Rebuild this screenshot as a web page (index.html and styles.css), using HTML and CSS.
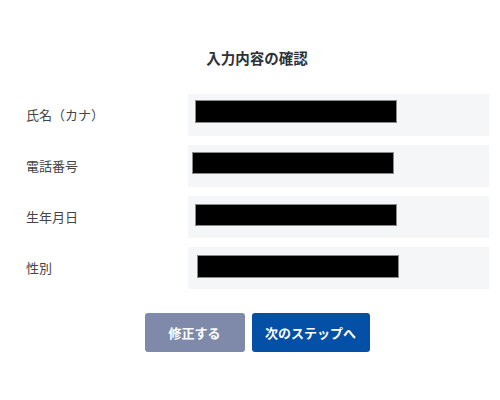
FILE: index.html
```html
<!DOCTYPE html>
<html lang="ja">
<head>
<meta charset="utf-8">
<link rel="stylesheet" href="styles.css">
</head>
<body>
<main class="confirm">
  <h1 class="title">入力内容の確認</h1>
  <dl class="list">
    <div class="row">
      <dt class="label">氏名（カナ）</dt>
      <dd class="value"><span class="mask mask-1"></span></dd>
    </div>
    <div class="row">
      <dt class="label">電話番号</dt>
      <dd class="value"><span class="mask mask-2"></span></dd>
    </div>
    <div class="row">
      <dt class="label">生年月日</dt>
      <dd class="value"><span class="mask mask-3"></span></dd>
    </div>
    <div class="row">
      <dt class="label">性別</dt>
      <dd class="value"><span class="mask mask-4"></span></dd>
    </div>
  </dl>
  <div class="actions">
    <button class="btn btn-back">修正する</button>
    <button class="btn btn-next">次のステップへ</button>
  </div>
</main>
</body>
</html>
```
FILE: styles.css
```css
* { box-sizing: border-box; }
html, body { margin: 0; padding: 0; background: #ffffff; }
body {
  font-family: "Noto Sans CJK JP", "Noto Sans", sans-serif;
  color: #333333;
}
.confirm {
  width: 489px;
  padding: 0 0 0 25px;
}
.title {
  margin: 0;
  padding-top: 47px;
  height: 94px;
  font-size: 14.5px;
  line-height: 22px;
  font-weight: 700;
  text-align: center;
  color: #2e3136;
}
.list {
  margin: 0;
  display: flex;
  flex-direction: column;
  gap: 9px;
}
.row {
  display: flex;
  align-items: center;
  height: 42px;
}
.label {
  width: 163px;
  flex: none;
  font-size: 13px;
  line-height: 20px;
  color: #444444;
  padding-left: 1px;
}
.value {
  margin: 0;
  flex: 1;
  height: 42px;
  background: #f5f6f8;
  position: relative;
}
.mask {
  display: block;
  width: 200px;
  height: 20px;
  background: #000000;
  box-shadow: 0 0 0 1px #8a8a8a;
}
.mask-1 { margin: 7px 0 0 8px; height: 21px; }
.mask-2 { margin: 8px 0 0 5px; }
.mask-3 { margin: 9px 0 0 8px; }
.mask-4 { margin: 9px 0 0 10px; height: 21px; }
.actions {
  display: flex;
  justify-content: center;
  gap: 7px;
  margin-top: 24px;
}
.btn {
  height: 39px;
  border: none;
  border-radius: 3px;
  color: #ffffff;
  font-family: "Noto Sans CJK JP", "Noto Sans", sans-serif;
  font-size: 13px;
  font-weight: 700;
  padding: 0;
}
.btn-back { width: 100px; background: #7f8aab; }
.btn-next { width: 118px; background: #0350a6; }
```
